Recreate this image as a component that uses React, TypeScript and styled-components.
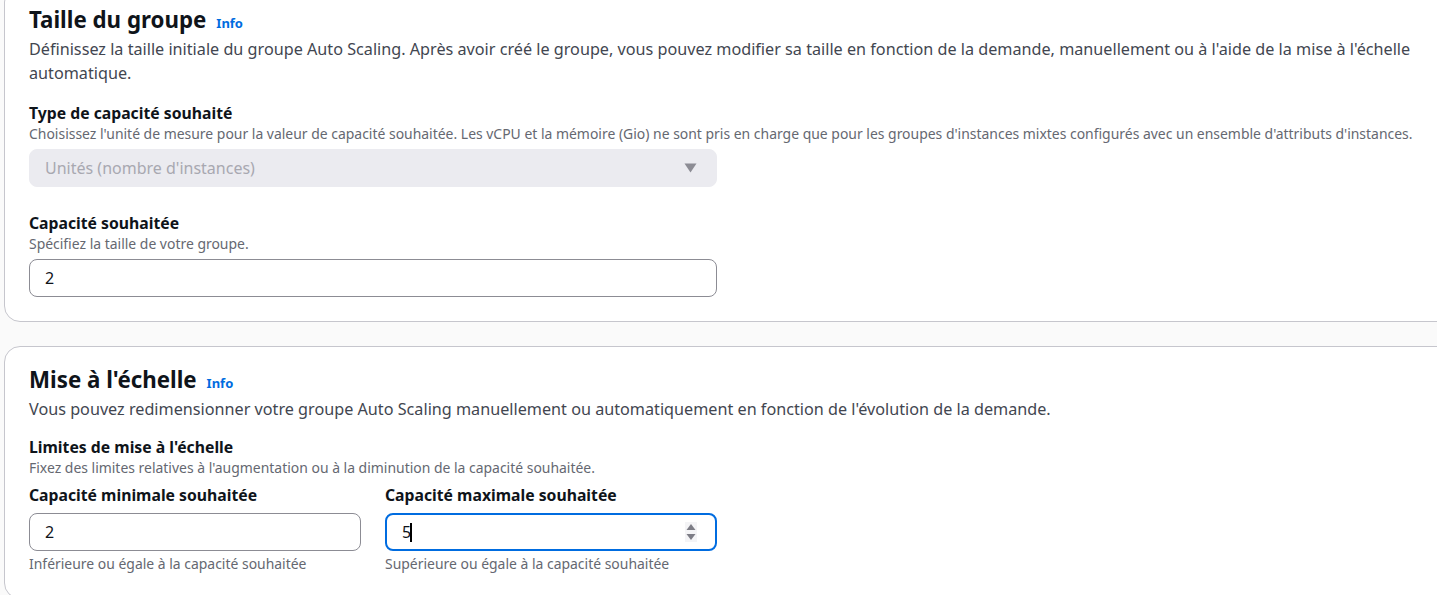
import React from "react";
import styled, { createGlobalStyle } from "styled-components";

const Global = createGlobalStyle`
  html, body {
    margin: 0;
    padding: 0;
    background: #fafafa;
    overflow: hidden;
    font-family: "Noto Sans", "Open Sans", Arial, sans-serif;
    color: #0f141a;
  }
`;

const Page = styled.div`
  display: flex;
  flex-direction: column;
  gap: 24px;
  padding-left: 4px;
  width: 1470px;
`;

const Card = styled.section<{ $first?: boolean }>`
  background: #ffffff;
  border: 1px solid #c6c6cd;
  border-radius: 16px;
  padding: 19px 24px 24px;
  margin-top: ${(p) => (p.$first ? "-14px" : "0")};
  width: 1410px;
`;

const HeaderRow = styled.div`
  display: flex;
  align-items: baseline;
  gap: 10px;
`;

const Title = styled.h2`
  margin: 0;
  font-size: 22.3px;
  line-height: 28px;
  font-weight: 700;
  color: #0f141a;
`;

const InfoLink = styled.a`
  font-size: 13px;
  font-weight: 700;
  color: #006ce0;
  text-decoration: none;
`;

const Description = styled.p`
  margin: 3px 0 0;
  font-size: 16.2px;
  line-height: 24px;
  color: #424650;
`;

const Field = styled.div<{ $mt: number }>`
  display: flex;
  flex-direction: column;
  margin-top: ${(p) => p.$mt}px;
`;

const Label = styled.div`
  font-size: 15.75px;
  line-height: 22px;
  font-weight: 700;
  color: #0f141a;
`;

const Hint = styled.div`
  font-size: 13.94px;
  line-height: 20px;
  color: #656871;
`;

const Box = styled.div<{ $disabled?: boolean; $focused?: boolean; $width: number; $mt: number }>`
  box-sizing: border-box;
  width: ${(p) => p.$width}px;
  height: 38px;
  margin-top: ${(p) => p.$mt}px;
  display: flex;
  align-items: center;
  padding: ${(p) => (p.$focused ? "0 18px 0 15px" : p.$disabled ? "0 19px 0 15px" : "0 16px 0 15px")};
  border-radius: 8px;
  border: ${(p) =>
    p.$disabled ? "1px solid #ebebf0" : p.$focused ? "2px solid #006ce0" : "1px solid #8c8c94"};
  background: ${(p) => (p.$disabled ? "#ebebf0" : "#ffffff")};
  color: ${(p) => (p.$disabled ? "#a8a8b0" : "#0f141a")};
  font-size: 16px;
  line-height: 22px;
`;

const Value = styled.span`
  flex: 1;
  display: flex;
  align-items: center;
`;

const Caret = styled.span`
  display: inline-block;
  width: 1.5px;
  height: 19px;
  background: #000;
  margin-left: -1px;
`;

const Columns = styled.div`
  display: flex;
  gap: 24px;
  margin-top: 6px;
`;

const Column = styled.div`
  display: flex;
  flex-direction: column;
`;

const HelpBelow = styled(Hint)`
  margin-top: 3px;
`;

const DownArrow = () => (
  <svg width="13" height="10" viewBox="0 0 13 10">
    <path d="M0.5 0.5 H12.5 L6.5 9.5 Z" fill="#8c8c94" />
  </svg>
);

const Spinner = () => (
  <svg width="12" height="20" viewBox="0 0 12 20">
    <rect x="0" y="0" width="12" height="20" fill="#f4f4f6" />
    <path d="M1.5 8 L6 2 L10.5 8 Z" fill="#7d7d86" />
    <path d="M1.5 12 L10.5 12 L6 18 Z" fill="#7d7d86" />
  </svg>
);

export default function App() {
  return (
    <>
      <Global />
      <Page>
        <Card $first>
          <HeaderRow>
            <Title>Taille du groupe</Title>
            <InfoLink href="#">Info</InfoLink>
          </HeaderRow>
          <Description>
            Définissez la taille initiale du groupe Auto Scaling. Après avoir créé le groupe, vous pouvez
            modifier sa taille en fonction de la demande, manuellement ou à l'aide de la mise à l'échelle
            automatique.
          </Description>
          <Field $mt={17}>
            <Label>Type de capacité souhaité</Label>
            <Hint>
              Choisissez l'unité de mesure pour la valeur de capacité souhaitée. Les vCPU et la mémoire (Gio)
              ne sont pris en charge que pour les groupes d'instances mixtes configurés avec un ensemble
              d'attributs d'instances.
            </Hint>
            <Box $disabled $width={688} $mt={5}>
              <Value>Unités (nombre d'instances)</Value>
              <DownArrow />
            </Box>
          </Field>
          <Field $mt={25}>
            <Label>Capacité souhaitée</Label>
            <Hint>Spécifiez la taille de votre groupe.</Hint>
            <Box $width={688} $mt={5}>
              <Value>2</Value>
            </Box>
          </Field>
        </Card>

        <Card>
          <HeaderRow>
            <Title>Mise à l'échelle</Title>
            <InfoLink href="#">Info</InfoLink>
          </HeaderRow>
          <Description>
            Vous pouvez redimensionner votre groupe Auto Scaling manuellement ou automatiquement en fonction de
            l'évolution de la demande.
          </Description>
          <Field $mt={15}>
            <Label>Limites de mise à l'échelle</Label>
            <Hint>Fixez des limites relatives à l'augmentation ou à la diminution de la capacité souhaitée.</Hint>
          </Field>
          <Columns>
            <Column>
              <Label>Capacité minimale souhaitée</Label>
              <Box $width={332} $mt={7}>
                <Value>2</Value>
              </Box>
              <HelpBelow>Inférieure ou égale à la capacité souhaitée</HelpBelow>
            </Column>
            <Column>
              <Label>Capacité maximale souhaitée</Label>
              <Box $width={332} $mt={7} $focused>
                <Value>
                  5<Caret />
                </Value>
                <Spinner />
              </Box>
              <HelpBelow>Supérieure ou égale à la capacité souhaitée</HelpBelow>
            </Column>
          </Columns>
        </Card>
      </Page>
    </>
  );
}
